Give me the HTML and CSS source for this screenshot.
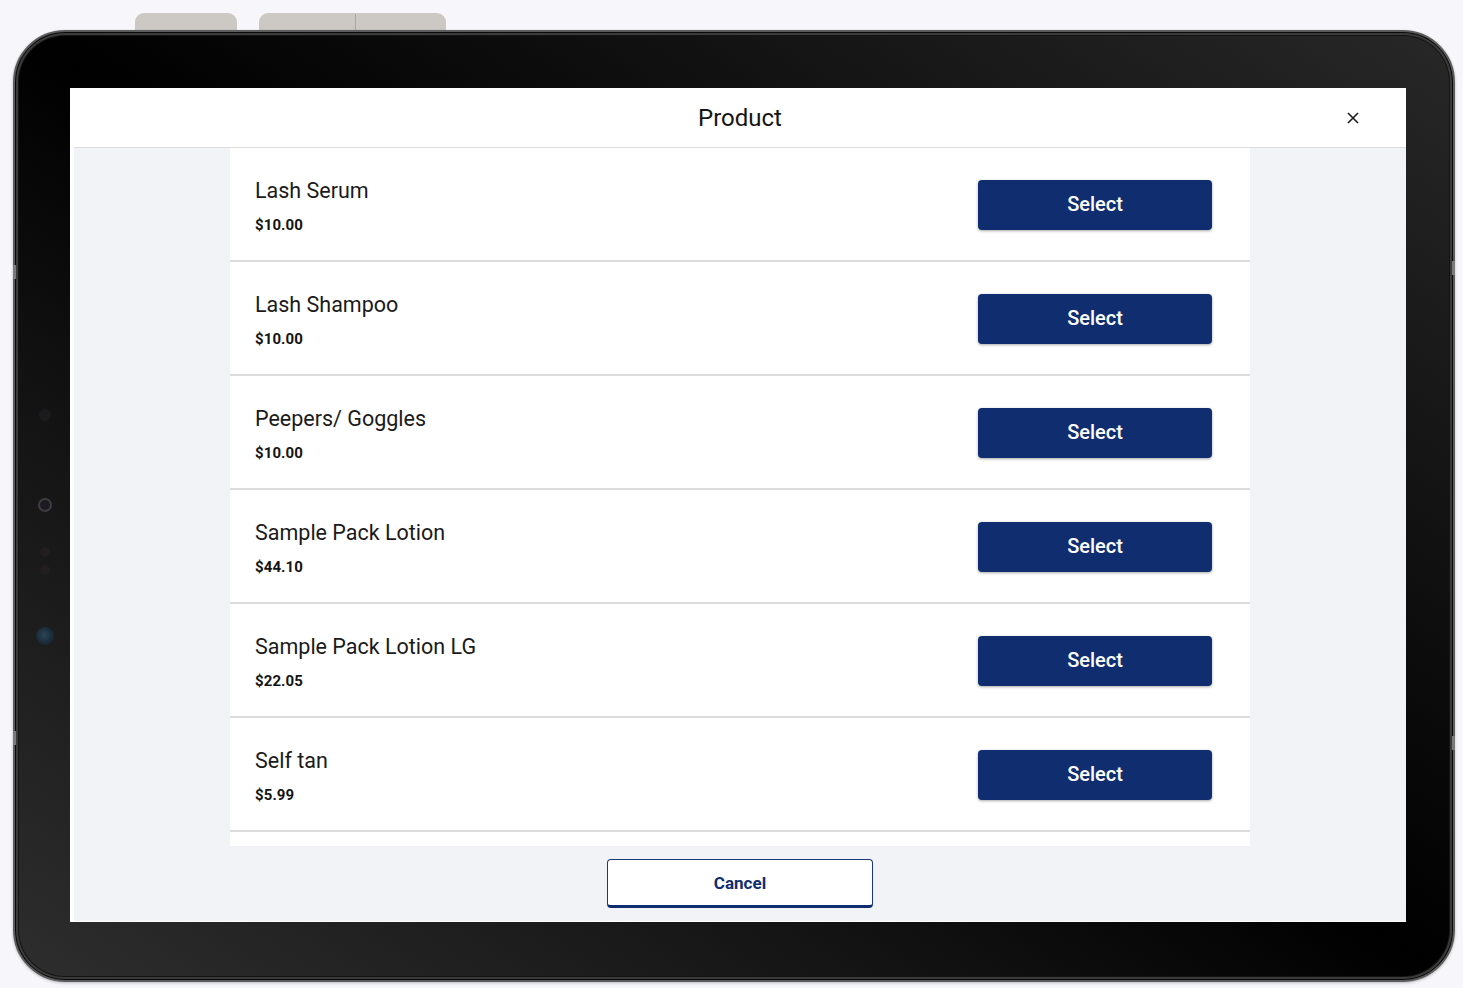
FILE: index.html
```html
<!DOCTYPE html>
<html lang="en">
<head>
<meta charset="utf-8">
<title>Product</title>
<link rel="stylesheet" href="styles.css">
</head>
<body>
<div class="stage">
  <div class="hw-btn hw-btn-a"></div>
  <div class="hw-btn hw-btn-b"><span class="hw-split"></span></div>
  <div class="tablet">
    <span class="side-key side-l1"></span>
    <span class="side-key side-l2"></span>
    <span class="side-key side-r1"></span>
    <span class="side-key side-r2"></span>
    <span class="sensor s1"></span>
    <span class="sensor s2"></span>
    <span class="sensor s3"></span>
    <span class="sensor s4"></span>
    <span class="sensor s5"></span>
    <div class="screen">
      <header class="dlg-head">
        <h1 class="dlg-title">Product</h1>
        <button class="dlg-close" aria-label="Close">
          <svg width="12" height="12" viewBox="0 0 12 12"><path d="M1 1 L11 11 M11 1 L1 11" stroke="#1b1b1b" stroke-width="1.6" fill="none"/></svg>
        </button>
      </header>
      <div class="dlg-body">
        <div class="list">
          <div class="row">
            <div class="info"><div class="name">Lash Serum</div><div class="price">$10.00</div></div>
            <button class="select">Select</button>
          </div>
          <div class="row">
            <div class="info"><div class="name">Lash Shampoo</div><div class="price">$10.00</div></div>
            <button class="select">Select</button>
          </div>
          <div class="row">
            <div class="info"><div class="name">Peepers/ Goggles</div><div class="price">$10.00</div></div>
            <button class="select">Select</button>
          </div>
          <div class="row">
            <div class="info"><div class="name">Sample Pack Lotion</div><div class="price">$44.10</div></div>
            <button class="select">Select</button>
          </div>
          <div class="row">
            <div class="info"><div class="name">Sample Pack Lotion LG</div><div class="price">$22.05</div></div>
            <button class="select">Select</button>
          </div>
          <div class="row">
            <div class="info"><div class="name">Self tan</div><div class="price">$5.99</div></div>
            <button class="select">Select</button>
          </div>
          <div class="row">
            <div class="info"><div class="name">&nbsp;</div><div class="price">&nbsp;</div></div>
          </div>
        </div>
        <button class="cancel">Cancel</button>
      </div>
    </div>
  </div>
</div>
</body>
</html>
```
FILE: styles.css
```css
html, body {
  margin: 0;
  padding: 0;
  background: #f7f7fb;
  font-family: Roboto, "Noto Sans", sans-serif;
}

.stage {
  position: relative;
  padding: 30px 0 0 13px;
  width: 1463px;
  height: 988px;
  box-sizing: border-box;
  overflow: hidden;
}

.hw-btn {
  position: absolute;
  top: 13px;
  height: 24px;
  background: #ccc9c5;
  border-radius: 9px 9px 0 0;
}
.hw-btn-a { left: 135px; width: 102px; }
.hw-btn-b { left: 259px; width: 187px; }
.hw-split {
  position: absolute;
  left: 96px;
  top: 1px;
  width: 1px;
  height: 23px;
  background: #a9a6a2;
}

.tablet {
  position: relative;
  z-index: 1;
  width: 1442px;
  height: 952px;
  box-sizing: border-box;
  border: 2px solid #5c5c5c;
  border-radius: 52px;
  padding: 56px 47px 58px 55px;
  background: linear-gradient(to top right, #2e2e2e 0%, #121212 32%, #000 50%, #0c0c0c 66%, #282828 100%);
  box-shadow: inset 0 0 0 1px #0a0a0a, inset 0 0 0 3px #3b3b3b, inset 0 0 0 4px #141414, 0 1px 3px rgba(0,0,0,0.25);
}

.side-key {
  position: absolute;
  width: 3px;
  height: 14px;
  background: #7a7a7a;
}
.side-l1 { left: -2px; top: 233px; }
.side-l2 { left: -2px; top: 699px; }
.side-r1 { right: -2px; top: 229px; }
.side-r2 { right: -2px; top: 704px; }

.sensor {
  position: absolute;
  border-radius: 50%;
}
.s1 { left: 24px; top: 377px; width: 12px; height: 12px; background: #1b1b1d; }
.s2 { left: 23px; top: 466px; width: 14px; height: 14px; background: #1e1a24; box-shadow: inset 0 0 0 2px #3d3d40; }
.s3 { left: 25px; top: 515px; width: 10px; height: 10px; background: #231d22; }
.s4 { left: 25px; top: 533px; width: 10px; height: 10px; background: #231d22; }
.s5 { left: 21px; top: 595px; width: 18px; height: 18px; background: radial-gradient(circle at 45% 45%, #2a4558 0%, #1b2c3a 55%, #14202a 100%); }

.screen {
  width: 1336px;
  height: 834px;
  box-sizing: border-box;
  background: #fff;
  padding: 0 0 1px 4px;
  display: flex;
  flex-direction: column;
}

.dlg-head {
  position: relative;
  height: 59px;
  flex: none;
  border-bottom: 1px solid #dcdcdc;
  display: flex;
  align-items: center;
  justify-content: center;
}
.dlg-title {
  margin: 0;
  font-size: 24px;
  font-weight: 400;
  color: #151515;
}
.dlg-close {
  position: absolute;
  right: 47px;
  top: 18px;
  width: 12px;
  height: 24px;
  padding: 0;
  border: 0;
  background: transparent;
  display: flex;
  align-items: center;
  justify-content: center;
}

.dlg-body {
  flex: 1;
  background: #f2f3f7;
  display: flex;
  flex-direction: column;
  align-items: center;
  min-height: 0;
}

.list {
  width: 1020px;
  height: 698px;
  flex: none;
  overflow: hidden;
  background: #fff;
}

.row {
  height: 112px;
  border-bottom: 2px solid #dddddd;
  display: flex;
  align-items: center;
  justify-content: space-between;
  padding: 0 38px 0 25px;
}

.info {
  display: flex;
  flex-direction: column;
  gap: 12px;
  padding-top: 4px;
}
.name {
  font-size: 21.5px;
  line-height: 26px;
  color: #1a1a1a;
}
.price {
  font-size: 15px;
  line-height: 18px;
  font-weight: 700;
  color: #141414;
  letter-spacing: 0.1px;
}

.select {
  width: 234px;
  height: 50px;
  margin-top: 2px;
  padding: 0 0 2px;
  border: 0;
  border-radius: 4px;
  background: #102e6f;
  color: #fff;
  font-family: Roboto, sans-serif;
  font-size: 20px;
  font-weight: 500;
  box-shadow: 0 1px 3px rgba(0,0,0,0.35);
}

.cancel {
  margin-top: 13px;
  width: 266px;
  height: 49px;
  box-sizing: border-box;
  background: #fff;
  border: 1px solid #1a3777;
  border-bottom: 3px solid #102e6f;
  border-radius: 4px;
  color: #102e6f;
  font-family: Roboto, sans-serif;
  font-size: 17px;
  font-weight: 700;
  padding: 0;
}
```
